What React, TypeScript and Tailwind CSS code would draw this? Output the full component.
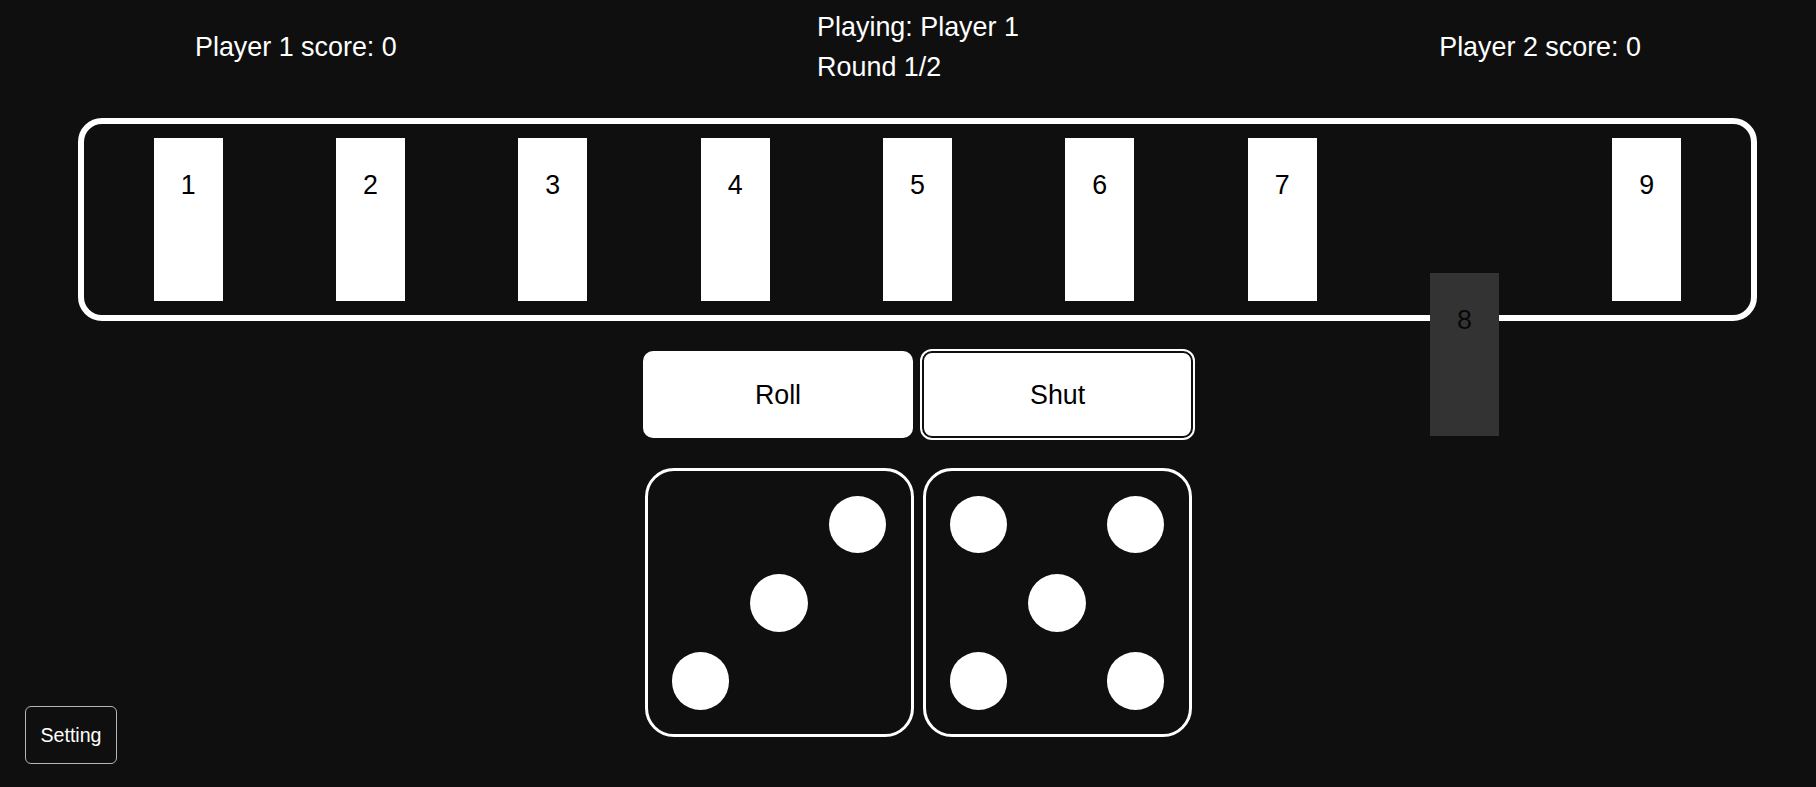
import React from 'react';

const tiles = [1, 2, 3, 4, 5, 6, 7, 8, 9];
const shutTiles = [8];

// 3x3 grid cells that get a pip, per face
const faces: Record<number, number[]> = {
  1: [4],
  2: [2, 6],
  3: [2, 4, 6],
  4: [0, 2, 6, 8],
  5: [0, 2, 4, 6, 8],
  6: [0, 2, 3, 5, 6, 8],
};

function Die({ value }: { value: number }) {
  const pips = faces[value] || [];
  return (
    <div className="w-[269px] h-[269px] border-[3px] border-white rounded-[29px] p-[13.9px] grid grid-cols-3 grid-rows-3">
      {Array.from({ length: 9 }).map((_, i) => (
        <div key={i} className="flex items-center justify-center">
          {pips.includes(i) && <div className="w-[57.5px] h-[57.5px] rounded-full bg-white" />}
        </div>
      ))}
    </div>
  );
}

export default function App() {
  return (
    <div
      className="relative w-full min-h-[787px] overflow-hidden bg-[#0f0f0f] text-white"
      style={{ fontFamily: '"Liberation Sans", Arial, sans-serif' }}
    >
      {/* Header */}
      <div className="flex items-center justify-between pl-[195px] pr-[175px] pt-[11.8px] text-[26.9px] leading-[30px]">
        <p>Player 1 score: 0</p>
        <div className="flex flex-col gap-[10.7px]">
          <p>Playing: Player 1</p>
          <p>Round 1/2</p>
        </div>
        <p>Player 2 score: 0</p>
      </div>

      {/* Board */}
      <div className="ml-[78px] mt-[35.5px] w-[1679px] h-[203px] border-[6px] border-white rounded-[24px] px-[13px] py-[14.3px] grid grid-cols-9">
        {tiles.map((n) => {
          const down = shutTiles.includes(n);
          return (
            <div key={n} className="flex justify-center h-full">
              <div
                className={
                  down
                    ? 'relative z-10 w-[68.7px] h-full bg-[#333333] text-[#080808] text-center text-[26.8px] leading-[30px] pt-[31.5px] translate-y-[135px]'
                    : 'w-[68.7px] h-full bg-white text-black text-center text-[26.8px] leading-[30px] pt-[31.5px]'
                }
              >
                {n}
              </div>
            </div>
          );
        })}
      </div>

      {/* Actions */}
      <div className="ml-[642.7px] mt-[30.3px] flex gap-[9px]">
        <button className="w-[270.6px] h-[86.7px] rounded-[10px] bg-white text-black text-[26.8px] leading-[30px]">
          Roll
        </button>
        <button className="w-[270.6px] h-[86.7px] rounded-[10px] bg-white text-black text-[26.8px] leading-[30px] border-2 border-[#0f0f0f] outline-2 outline-offset-[0.5px] outline-white">
          Shut
        </button>
      </div>

      {/* Dice */}
      <div className="ml-[644.5px] mt-[30.3px] flex gap-[9px]">
        <Die value={3} />
        <Die value={5} />
      </div>

      {/* Setting */}
      <button className="absolute left-[25px] bottom-[23px] w-[92px] h-[58px] rounded-[6px] border border-[#b5b5b5] text-white text-[19.6px] leading-[24px]">
        Setting
      </button>
    </div>
  );
}
